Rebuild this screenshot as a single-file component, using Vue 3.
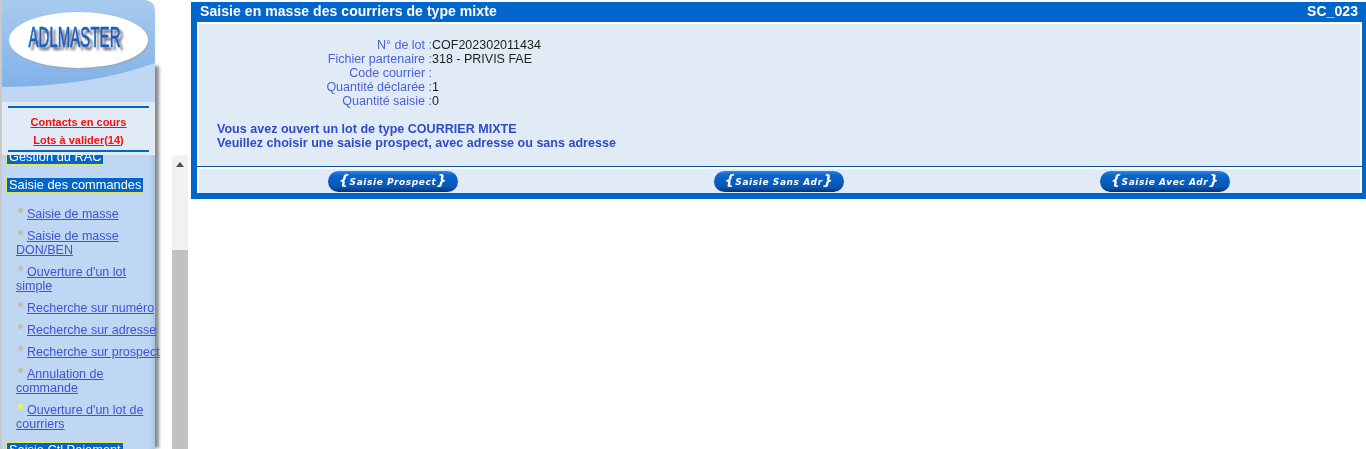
<template>
  <div class="page">
    <aside class="sidebar">
      <div class="logo">
        <svg width="153" height="102" viewBox="0 0 153 102">
          <defs>
            <linearGradient id="sky" x1="0" y1="0" x2="0" y2="1">
              <stop offset="0" stop-color="#a9cbf0" />
              <stop offset="1" stop-color="#7fb2e8" />
            </linearGradient>
            <filter id="soft"><feGaussianBlur stdDeviation="1.2" /></filter>
            <filter id="letterShadow" x="-10%" y="-20%" width="120%" height="150%">
              <feDropShadow dx="3" dy="3" stdDeviation="1.1" flood-color="#70747b" />
            </filter>
          </defs>
          <path d="M0 0H143Q153 1 153 12V102H0Z" fill="#bfd7f3" />
          <path d="M0 0H143Q153 1 153 12V63Q90 86 0 87Z" fill="url(#sky)" />
          <ellipse cx="78" cy="41" rx="69" ry="28" fill="#a0a6ae" filter="url(#soft)" />
          <ellipse cx="76.5" cy="40" rx="69.5" ry="28" fill="#fff" />
          <text class="logo-text" x="72.5" y="47" text-anchor="middle" textLength="92" lengthAdjust="spacingAndGlyphs">ADLMASTER</text>
        </svg>
      </div>
      <div class="contacts">
        <a href="#">Contacts en cours</a>
        <a href="#">Lots à valider(14)</a>
      </div>
      <nav class="menu">
        <div class="menu-scroll">
          <h4 class="menu-title">Gestion du RAC</h4>
          <h4 class="menu-title">Saisie des commandes</h4>
          <ul>
            <li v-for="item in menuItems" :key="item.label">
              <span class="dot" :class="{ active: item.active }"></span><a href="#">{{ item.label }}</a>
            </li>
          </ul>
          <h4 class="menu-title">Saisie Ctl Paiement</h4>
        </div>
      </nav>
    </aside>

    <div class="scrollbar">
      <div class="scroll-track">
        <span class="arrow"></span>
      </div>
      <div class="scroll-thumb"></div>
    </div>

    <main class="main">
      <section class="frame">
        <header class="frame-head">
          <span>Saisie en masse des courriers de type mixte</span>
          <span>SC_023</span>
        </header>
        <div class="frame-body">
          <dl class="fields">
            <template v-for="field in fields" :key="field.label">
              <dt>{{ field.label }} :</dt>
              <dd>{{ field.value }}</dd>
            </template>
          </dl>
          <p class="message">
            Vous avez ouvert un lot de type COURRIER MIXTE<br />
            Veuillez choisir une saisie prospect, avec adresse ou sans adresse
          </p>
        </div>
        <div class="frame-actions">
          <button v-for="action in actions" :key="action" class="pill">
            <span class="brace">{</span>{{ action }}<span class="brace">}</span>
          </button>
        </div>
      </section>
    </main>
  </div>
</template>

<script setup>
const menuItems = [
  { label: 'Saisie de masse' },
  { label: 'Saisie de masse DON/BEN' },
  { label: "Ouverture d'un lot simple" },
  { label: 'Recherche sur numéro' },
  { label: 'Recherche sur adresse' },
  { label: 'Recherche sur prospect' },
  { label: 'Annulation de commande' },
  { label: "Ouverture d'un lot de courriers", active: true }
]

const fields = [
  { label: 'N° de lot', value: 'COF202302011434' },
  { label: 'Fichier partenaire', value: '318 - PRIVIS FAE' },
  { label: 'Code courrier', value: '' },
  { label: 'Quantité déclarée', value: '1' },
  { label: 'Quantité saisie', value: '0' }
]

const actions = ['Saisie Prospect', 'Saisie Sans Adr', 'Saisie Avec Adr']
</script>

<style>
html,
body {
  margin: 0;
  background: #fff;
  overflow: hidden;
}
</style>

<style scoped>
.page {
  display: flex;
  height: 449px;
  overflow: hidden;
  font-family: "Liberation Sans", Arial, sans-serif;
  background: #fff;
  filter: blur(0.3px);
}

/* left menu */
.sidebar {
  position: relative;
  flex: none;
  width: 172px;
  height: 449px;
  box-sizing: border-box;
  padding-left: 2px;
  background: linear-gradient(90deg, #c9c9c9 0, #c9c9c9 2px, transparent 2px);
}

.logo {
  position: relative;
  z-index: 2;
  width: 153px;
  height: 102px;
}

.logo svg {
  display: block;
}

.logo-text {
  font-family: "Liberation Sans", Arial, sans-serif;
  font-size: 29px;
  fill: #1560c0;
  stroke: #1560c0;
  stroke-width: 0.7px;
  filter: url(#letterShadow);
}

.contacts {
  position: relative;
  z-index: 2;
  width: 153px;
  height: 53px;
  box-sizing: border-box;
  margin: 0;
  padding: 9px 6px 4px;
  background: #e1ebf6;
  display: flex;
  flex-direction: column;
  align-items: center;
  justify-content: center;
  gap: 5px;
  background-image: linear-gradient(#0066cc, #0066cc), linear-gradient(#0066cc, #0066cc);
  background-size: 141px 2px;
  background-repeat: no-repeat;
  background-position: 6px 4px, 6px 48px;
}

.contacts a {
  color: #f01010;
  font-size: 11px;
  line-height: 13px;
  font-weight: bold;
}

.menu {
  position: absolute;
  top: 65px;
  left: 2px;
  width: 153px;
  height: 384px;
  background: linear-gradient(90deg, #bfd7f3 0, #bfd7f3 147px, #a9c3e4 153px);
  box-shadow: 5px 0 3px -1px #8b8b8b;
}

.menu-scroll {
  position: absolute;
  top: 84px;
  left: 0;
  width: 153px;
}

.menu-title {
  display: table;
  box-sizing: border-box;
  margin: 0 0 12px 4px;
  padding: 0 2px;
  height: 16px;
  line-height: 14px;
  border: 1px solid #e3e75a;
  background: #0066cc;
  color: #fff;
  font-size: 12.8px;
  font-weight: normal;
}

.menu ul {
  list-style: none;
  margin: 0;
  padding: 2px 0 3px 14px;
  width: 146px;
}

.menu li {
  font-size: 12.5px;
  line-height: 14px;
  margin-bottom: 8px;
}

.menu li a {
  color: #3d55d2;
}

.dot {
  display: inline-block;
  width: 5px;
  height: 5px;
  margin: 0 4px 5px 2px;
  border-radius: 50%;
  background: #c5bdae;
}

.dot.active {
  background: #f2f24a;
}

/* page scrollbar */
.scrollbar {
  flex: none;
  width: 16px;
  height: 294px;
  margin: 155px 2px 0 0;
  background: #f1f1f1;
  display: flex;
  flex-direction: column;
  justify-content: space-between;
}

.scroll-track {
  display: flex;
  justify-content: center;
  padding-top: 7px;
}

.arrow {
  width: 0;
  height: 0;
  border-left: 4px solid transparent;
  border-right: 4px solid transparent;
  border-bottom: 5px solid #505050;
}

.scroll-thumb {
  height: 199px;
  background: #c1c1c1;
}

/* main panel */
.main {
  flex: 1;
  min-width: 0;
  padding: 2px 0 0 1px;
}

.frame {
  background: #0066cc;
  padding: 0 4px 6px 6px;
  height: 197px;
  box-sizing: border-box;
  display: flex;
  flex-direction: column;
}

.frame-head {
  display: flex;
  justify-content: space-between;
  height: 20px;
  flex: none;
  padding: 0 4px 0 3px;
  color: #fff;
  font-size: 14px;
  font-weight: bold;
  line-height: 18px;
  letter-spacing: 0.06px;
}

.frame-body {
  flex: none;
  height: 144px;
  box-sizing: border-box;
  border: 2px solid #fff;
  border-bottom: 0;
  background: #e1ebf6;
  padding-top: 14px;
}

.fields {
  display: grid;
  grid-template-columns: 233px 1fr;
  margin: 0;
  font-size: 12.5px;
  line-height: 14px;
}

.fields dt {
  color: #4a62d4;
  text-align: right;
}

.fields dd {
  margin: 0;
  min-height: 14px;
  color: #1c1c1c;
}

.message {
  margin: 14px 0 0 18px;
  color: #2f4bc8;
  font-size: 12.56px;
  font-weight: bold;
  line-height: 14px;
}

.frame-actions {
  flex: none;
  height: 26px;
  box-sizing: border-box;
  margin-top: 1px;
  border: 2px solid #fff;
  border-bottom: 0;
  background: #e1ebf6;
  box-shadow: 0 -1px 0 #0a4ea0;
  display: grid;
  grid-template-columns: repeat(3, 1fr);
  justify-items: center;
  align-items: start;
  padding: 2px 2px 0 1px;
}

.pill {
  width: 130px;
  height: 21px;
  padding: 0;
  border: 0;
  border-radius: 11px;
  background: linear-gradient(#2f86e0 0, #0b66cc 20%, #0556b4 78%, #03306e 100%);
  color: #fff;
  font-family: "DejaVu Sans", Verdana, sans-serif;
  font-size: 9px;
  font-weight: bold;
  font-style: italic;
  letter-spacing: 0.6px;
  line-height: 20px;
  white-space: nowrap;
}

.brace {
  font-size: 14px;
  line-height: 14px;
  font-weight: bold;
}
</style>
